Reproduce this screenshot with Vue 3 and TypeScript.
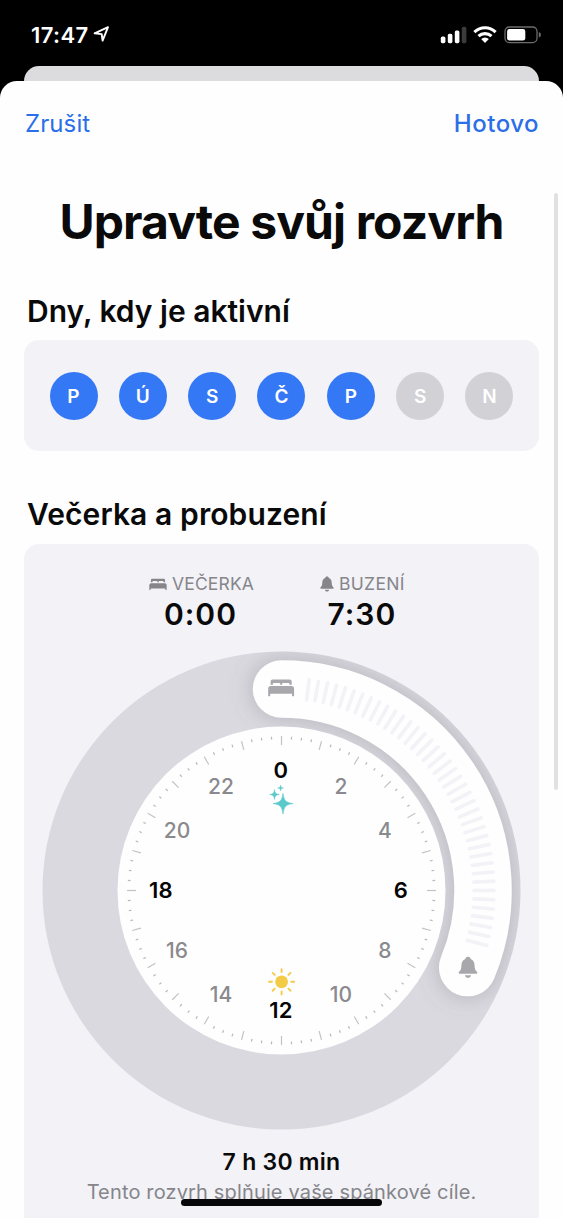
<script setup lang="ts">
interface Day {
  label: string
  active: boolean
}

interface Line {
  x1: number
  y1: number
  x2: number
  y2: number
}

const days: Day[] = [
  { label: 'P', active: true },
  { label: 'Ú', active: true },
  { label: 'S', active: true },
  { label: 'Č', active: true },
  { label: 'P', active: true },
  { label: 'S', active: false },
  { label: 'N', active: false },
]

const C = 239.5

function point(deg: number, r: number): [number, number] {
  const a = (deg * Math.PI) / 180
  return [C + r * Math.sin(a), C - r * Math.cos(a)]
}

function radial(deg: number, from: number, to: number): Line {
  const [x1, y1] = point(deg, from)
  const [x2, y2] = point(deg, to)
  return { x1, y1, x2, y2 }
}

const hourTicks = Array.from({ length: 24 }, (_, i) => radial(i * 15, 145.5, 154.5))
const quarterTicks = Array.from({ length: 96 }, (_, i) => i)
  .filter((i) => i % 4 !== 0)
  .map((i) => radial(i * 3.75, 151.3, 154))
const grip = Array.from({ length: 40 }, (_, i) => radial(7.5 + i * 2.5, 192.5, 212.5))

const hours = Array.from({ length: 12 }, (_, i) => {
  const [x, y] = point(i * 30, 120)
  return { value: i * 2, x: x - 0.5, y: y + 7.5, main: i % 3 === 0 }
})

const [sx, sy] = point(0, 201.5)
const [ex, ey] = point(112.5, 201.5)
const arc = `M${sx} ${sy}A201.5 201.5 0 0 1 ${ex} ${ey}`
</script>

<template>
  <div class="screen">
    <header class="status">
      <div class="clock">
        <span class="time">17:47</span>
        <svg width="17" height="18" viewBox="0 0 17 18">
          <path d="M1.6 8.3 15 2.2 9.6 15.6 8.7 9.1Z" fill="none" stroke="#fff" stroke-width="1.9" stroke-linejoin="round" />
        </svg>
      </div>
      <div class="indicators">
        <svg width="27" height="18" viewBox="0 0 27 18">
          <rect x="0.8" y="10.6" width="4.6" height="6.6" rx="1.6" fill="#fff" />
          <rect x="7.8" y="7.8" width="4.6" height="9.4" rx="1.6" fill="#fff" />
          <rect x="14.8" y="4.4" width="4.6" height="12.8" rx="1.6" fill="#fff" />
          <rect x="21.8" y="0.8" width="4.6" height="16.4" rx="1.6" fill="#3b3b3d" />
        </svg>
        <svg class="wifi" width="24" height="18" viewBox="0 0 24 18">
          <g fill="none" stroke="#fff" stroke-width="3.1">
            <path d="M1.4 6.1A15.2 15.2 0 0 1 22.6 6.1" />
            <path d="M5.5 10.2A9.4 9.4 0 0 1 18.5 10.2" />
          </g>
          <path d="M8.2 13A5.4 5.4 0 0 1 15.8 13L12 16.9Z" fill="#fff" />
        </svg>
        <svg class="battery" width="38" height="18" viewBox="0 0 38 18">
          <rect x="1" y="1" width="32" height="15.6" rx="4.4" fill="none" stroke="#6c6c6e" stroke-width="1.3" />
          <rect x="3.1" y="3" width="18.2" height="11.6" rx="2.4" fill="#fff" />
          <path d="M34.8 6Q37 6.8 37 8.8T34.8 11.6Z" fill="#6c6c6e" />
        </svg>
      </div>
    </header>

    <div class="back-sheet"></div>

    <main class="sheet">
      <nav class="nav">
        <a class="cancel">Zrušit</a>
        <a class="done">Hotovo</a>
      </nav>

      <h1>Upravte svůj rozvrh</h1>

      <h2 class="t-days">Dny, kdy je aktivní</h2>
      <section class="card days">
        <span v-for="(d, i) in days" :key="i" class="day" :class="{ off: !d.active }">{{ d.label }}</span>
      </section>

      <h2 class="t-sleep">Večerka a probuzení</h2>
      <section class="card sleep">
        <div class="times">
          <div class="entry bed">
            <div class="label">
              <svg width="18" height="13" viewBox="0 0 28 19"><use href="#bed" /></svg>
              <span>VEČERKA</span>
            </div>
            <strong>0:00</strong>
          </div>
          <div class="entry wake">
            <div class="label">
              <svg width="14" height="16" viewBox="0 0 20 22"><use href="#bell" /></svg>
              <span>BUZENÍ</span>
            </div>
            <strong>7:30</strong>
          </div>
        </div>

        <svg class="dial" width="479" height="479" viewBox="0 0 479 479">
          <defs>
            <g id="bed">
              <path d="M3 6V2.6Q3 0.4 5.2 0.4H22.8Q25 0.4 25 2.6V6H22.6V5Q22.6 4 21.6 4H16Q15 4 15 5V6H13V5Q13 4 12 4H6.4Q5.4 4 5.4 5V6Z" />
              <path d="M1 18.2Q0.5 18.2 0.5 17.6V10.4Q0.5 7.4 3.5 7.4H24.5Q27.5 7.4 27.5 10.4V17.6Q27.5 18.2 27 18.2H26Q25.4 18.2 25.4 17.6V15.6H2.6V17.6Q2.6 18.2 2 18.2Z" />
            </g>
            <g id="bell">
              <path d="M10 0.3C11.6 0.3 12.5 1.2 12.7 2.5C15.6 3.5 16.6 6 16.7 9C16.8 13 17.6 14.2 19.1 15.6C20 16.5 19.6 17.7 18.4 17.7H1.6C0.4 17.7 0 16.5 0.9 15.6C2.4 14.2 3.2 13 3.3 9C3.4 6 4.4 3.5 7.3 2.5C7.5 1.2 8.4 0.3 10 0.3Z" />
              <path d="M6.8 19.1H13.2C12.8 20.8 11.6 21.7 10 21.7S7.2 20.8 6.8 19.1Z" />
            </g>
            <filter id="soft" filterUnits="userSpaceOnUse" x="100" y="-60" width="440" height="520">
              <feGaussianBlur stdDeviation="10" />
            </filter>
            <clipPath id="ring"><circle cx="239.5" cy="239.5" r="239" /></clipPath>
          </defs>
          <circle cx="239.5" cy="239.5" r="239" fill="#dad9e0" />
          <g clip-path="url(#ring)">
            <path :d="arc" class="shadow" filter="url(#soft)" />
          </g>
          <circle cx="239.5" cy="239.5" r="164" fill="#fefefe" />
          <path :d="arc" class="range" />
          <line v-for="(l, i) in grip" :key="'g' + i" v-bind="l" class="grip" />
          <line v-for="(l, i) in hourTicks" :key="'h' + i" v-bind="l" class="tick" />
          <line v-for="(l, i) in quarterTicks" :key="'q' + i" v-bind="l" class="tick small" />
          <use href="#bed" transform="translate(225.7 28.2) scale(.96 .93)" fill="#a8a8ac" />
          <use href="#bell" transform="translate(416.2 305.5) scale(.98)" fill="#a8a8ac" />
          <text v-for="h in hours" :key="h.value" :x="h.x" :y="h.y" class="hour" :class="{ main: h.main }">{{ h.value }}</text>
          <g fill="#5bc8ca" stroke="#5bc8ca">
            <path d="M241 142.5C242 149.5 243.5 151.5 251 152.6C243.5 153.7 242 155.7 241 163C240 155.7 238.5 153.7 231 152.6C238.5 151.5 240 149.5 241 142.5Z" stroke-width=".6" />
            <path d="M232.5 138.5C233 142.1 233.8 143 237.3 143.5C233.8 144 233 144.9 232.5 148.5C232 144.9 231.2 144 227.7 143.5C231.2 143 232 142.1 232.5 138.5Z" stroke-width=".5" />
            <path d="M238.6 134C238.9 136.2 239.4 136.7 241.6 137C239.4 137.3 238.9 137.8 238.6 140C238.3 137.8 237.8 137.3 235.6 137C237.8 136.7 238.3 136.2 238.6 134Z" stroke-width=".4" />
          </g>
          <g transform="translate(239.6 330.8)">
            <circle r="6.4" fill="#f4cb46" />
            <line v-for="n in 8" :key="n" x1="0" y1="-9.7" x2="0" y2="-12.6" :transform="`rotate(${n * 45})`" class="ray" />
          </g>
        </svg>

        <p class="duration">7 h 30 min</p>
        <p class="note">Tento rozvrh splňuje vaše spánkové cíle.</p>
      </section>

      <div class="scrollbar"></div>
    </main>
    <div class="home"></div>
  </div>
</template>

<style>
html,
body {
  margin: 0;
  background: #000;
  overflow: hidden;
}
</style>

<style scoped>
.screen {
  position: relative;
  width: 563px;
  height: 1218px;
  overflow: hidden;
  background: #000;
  color: #0a0a0b;
  font-family: Inter, "Liberation Sans", sans-serif;
  display: flex;
  flex-direction: column;
}
.status {
  flex: none;
  height: 66px;
  box-sizing: border-box;
  padding: 0 21px 0 31px;
  display: flex;
  justify-content: space-between;
}
.clock {
  display: flex;
  color: #fff;
}
.time {
  width: 62px;
  padding-top: 21px;
  font-size: 22px;
  line-height: 28px;
  font-weight: 600;
  letter-spacing: 0.4px;
}
.clock svg {
  margin-top: 25px;
}
.indicators {
  display: flex;
  padding-top: 26px;
}
.wifi {
  margin-left: 6px;
}
.battery {
  margin-left: 7px;
}
.back-sheet {
  flex: none;
  height: 30px;
  margin: 0 24px -15px;
  border-radius: 15px 15px 0 0;
  background: #dcdcde;
}
.sheet {
  position: relative;
  flex: 1;
  min-height: 0;
  overflow: hidden;
  padding: 0 24px;
  border-radius: 17px 17px 0 0;
  background: #fefefe;
}
.nav {
  display: flex;
  justify-content: space-between;
  padding-top: 28px;
  font-size: 24px;
  line-height: 30px;
  color: #2a6fe8;
}
.cancel {
  padding-left: 1px;
  letter-spacing: 0.1px;
}
.done {
  font-weight: 550;
  letter-spacing: 0.5px;
}
h1,
h2,
p {
  margin: 0;
}
h1 {
  margin-top: 51px;
  font-size: 48px;
  line-height: 64px;
  font-weight: 650;
  text-align: center;
  letter-spacing: -0.9px;
  white-space: nowrap;
}
h2 {
  padding-left: 3px;
  font-size: 30px;
  line-height: 38px;
  font-weight: 600;
}
.t-days {
  margin-top: 38px;
}
.t-sleep {
  margin-top: 44px;
  letter-spacing: 0.1px;
}
.card {
  background: #f2f2f7;
  border-radius: 15px;
}
.days {
  height: 111px;
  margin-top: 10px;
  box-sizing: border-box;
  padding: 0 25.5px;
  display: flex;
  align-items: center;
  justify-content: space-between;
}
.day {
  width: 48px;
  height: 48px;
  border-radius: 50%;
  background: #3478f6;
  color: #fff;
  font-size: 19px;
  line-height: 49px;
  font-weight: 600;
  text-align: center;
}
.day.off {
  background: #d1d1d6;
}
.sleep {
  height: 720px;
  margin-top: 11px;
  display: flex;
  flex-direction: column;
  align-items: center;
}
.times {
  width: 100%;
  box-sizing: border-box;
  padding: 29px 0 0 125px;
  display: flex;
}
.entry {
  display: flex;
  flex-direction: column;
}
.bed {
  width: 171px;
}
.label {
  display: flex;
  align-items: center;
  gap: 5px;
  font-size: 17.5px;
  line-height: 22px;
  letter-spacing: 0.15px;
  color: #85858a;
}
.label svg {
  fill: #85858a;
}
.wake .label {
  gap: 5px;
  letter-spacing: 0.3px;
}
.entry strong {
  margin-top: 2px;
  font-size: 30px;
  line-height: 34px;
  font-weight: 620;
  letter-spacing: 1px;
}
.bed strong {
  padding-left: 15px;
}
.wake strong {
  padding-left: 7.5px;
}
.dial {
  flex: none;
  display: block;
  margin-top: 20px;
}
.shadow {
  fill: none;
  stroke: #77777f;
  stroke-opacity: 0.3;
  stroke-width: 64;
  stroke-linecap: round;
}
.range {
  fill: none;
  stroke: #fefefe;
  stroke-width: 57.5;
  stroke-linecap: round;
}
.grip {
  stroke: #f2f2f7;
  stroke-width: 3.6;
  stroke-linecap: round;
}
.tick {
  stroke: #c3c3c6;
  stroke-width: 1.2;
}
.small {
  stroke: #b8b8bb;
}
.hour {
  font-size: 21px;
  font-weight: 500;
  fill: #8a8a8e;
  text-anchor: middle;
}
.hour.main {
  font-size: 22px;
  font-weight: 600;
  letter-spacing: 0.3px;
  fill: #050505;
}
.ray {
  stroke: #f4cb46;
  stroke-width: 1.9;
  stroke-linecap: round;
}
.duration {
  margin-top: 17px;
  font-size: 23px;
  line-height: 30px;
  font-weight: 600;
  letter-spacing: 0.25px;
}
.note {
  margin-top: 1px;
  font-size: 20px;
  line-height: 28px;
  letter-spacing: 0.15px;
  color: #85858a;
  white-space: nowrap;
}
.scrollbar {
  position: absolute;
  top: 112px;
  right: 5px;
  width: 4px;
  height: 597px;
  border-radius: 2px;
  background: #e1e1e3;
}
.home {
  position: absolute;
  left: 181px;
  bottom: 12px;
  width: 201px;
  height: 7px;
  border-radius: 4px;
  background: #070709;
}
</style>
